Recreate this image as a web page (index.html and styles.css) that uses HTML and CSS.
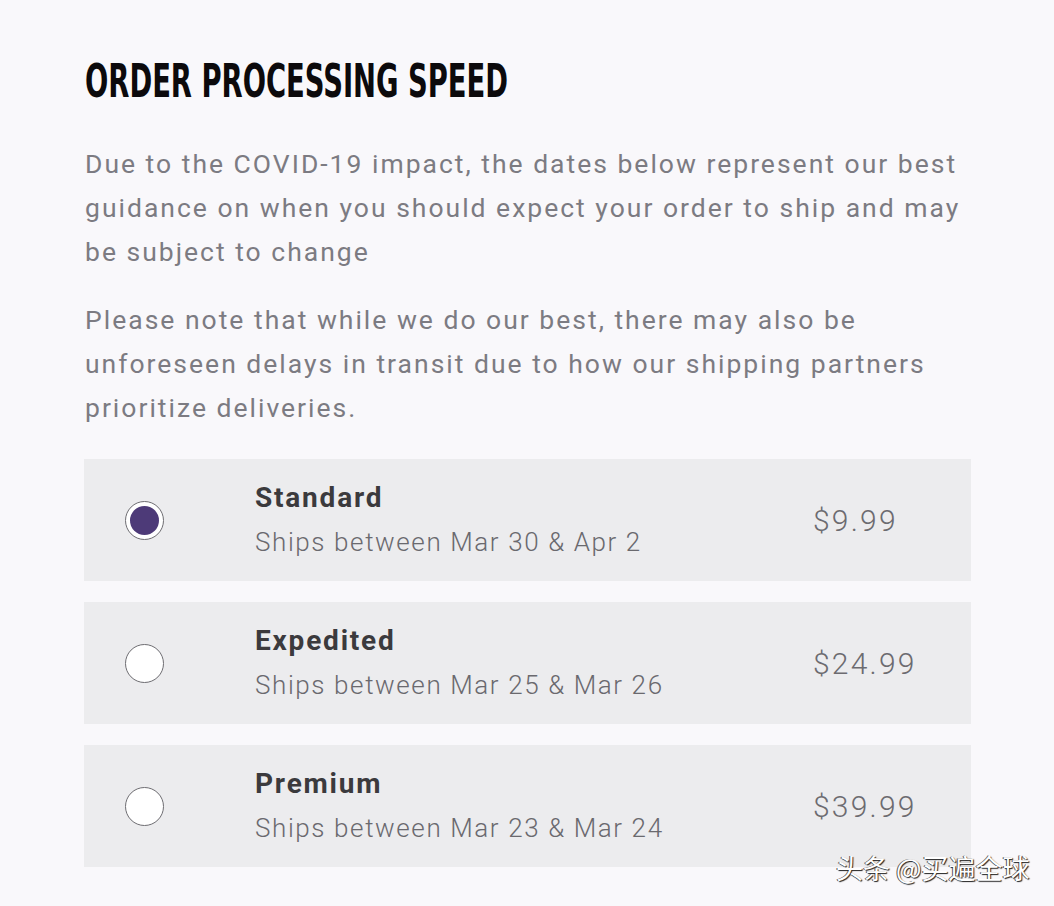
FILE: index.html
```html
<!DOCTYPE html>
<html>
<head>
<meta charset="utf-8">
<link rel="stylesheet" href="styles.css">
</head>
<body>
<main class="page">
  <h1 class="title"><span class="title-text">ORDER PROCESSING SPEED</span></h1>
  <p class="note">Due to the COVID-19 impact, the dates below represent our best guidance on when you should expect your order to ship and may be subject to change</p>
  <p class="note">Please note that while we do our best, there may also be unforeseen delays in transit due to how our shipping partners prioritize deliveries.</p>
  <div class="options">
    <div class="option">
      <div class="radio-cell"><span class="radio checked"></span></div>
      <div class="info">
        <div class="name">Standard</div>
        <div class="dates">Ships between Mar 30 &amp; Apr 2</div>
      </div>
      <div class="price">$9.99</div>
    </div>
    <div class="option">
      <div class="radio-cell"><span class="radio"></span></div>
      <div class="info">
        <div class="name">Expedited</div>
        <div class="dates">Ships between Mar 25 &amp; Mar 26</div>
      </div>
      <div class="price">$24.99</div>
    </div>
    <div class="option">
      <div class="radio-cell"><span class="radio"></span></div>
      <div class="info">
        <div class="name">Premium</div>
        <div class="dates">Ships between Mar 23 &amp; Mar 24</div>
      </div>
      <div class="price">$39.99</div>
    </div>
  </div>
</main>
<div class="watermark">头条 @买遍全球</div>
</body>
</html>
```

FILE: styles.css
```css
html, body {
  margin: 0;
  padding: 0;
}
body {
  background: #f9f8fb;
  width: 1054px;
  height: 906px;
  overflow: hidden;
  position: relative;
  font-family: Roboto, "Liberation Sans", sans-serif;
}
.page {
  padding: 58px 60px 0 85px;
}
.title {
  margin: 0 0 38px;
  height: 46px;
  line-height: 46px;
  font-family: "DejaVu Sans Condensed", "DejaVu Sans", sans-serif;
  font-weight: bold;
  font-size: 47px;
  color: #0c0a0c;
  white-space: nowrap;
}
.title-text {
  display: inline-block;
  transform: scaleX(0.648);
  transform-origin: left center;
}
.note {
  margin: 0 0 24px;
  font-size: 26.5px;
  line-height: 44px;
  letter-spacing: 2px;
  color: #7c7b82;
  width: 905px;
}
.options {
  display: flex;
  flex-direction: column;
  gap: 21px;
  margin-top: 29px;
  width: 887px;
  margin-left: -1px;
}
.option {
  display: flex;
  align-items: center;
  height: 122px;
  background: #ececee;
}
.radio-cell {
  width: 171px;
  display: flex;
  justify-content: flex-start;
  padding-left: 41px;
  box-sizing: border-box;
}
.radio {
  width: 39px;
  height: 39px;
  border-radius: 50%;
  border: 1.5px solid #6e6d72;
  background: #ffffff;
  box-sizing: border-box;
  position: relative;
}
.radio.checked::after {
  content: "";
  position: absolute;
  left: 4px;
  top: 4px;
  right: 4px;
  bottom: 4px;
  border-radius: 50%;
  background: #4d3a78;
}
.info {
  flex: 1;
  display: flex;
  flex-direction: column;
  gap: 4px;
}
.name {
  font-weight: bold;
  font-size: 28px;
  line-height: 40px;
  color: #3b3a3d;
  letter-spacing: 1.8px;
}
.dates {
  font-size: 26px;
  line-height: 40px;
  color: #6a696e;
  letter-spacing: 1.6px;
  font-weight: 300;
}
.price {
  width: 158px;
  font-size: 30px;
  font-weight: 300;
  color: #6c6b70;
  letter-spacing: 2.2px;
}
.watermark {
  position: absolute;
  left: 836px;
  top: 848px;
  font-family: "Noto Sans CJK SC", sans-serif;
  font-size: 27px;
  line-height: 40px;
  color: #ffffff;
  text-shadow: 1px 1px 1px #222, -1px 0 0 #555;
}
```
